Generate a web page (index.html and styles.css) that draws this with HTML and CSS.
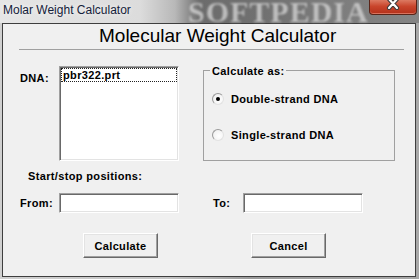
FILE: index.html
```html
<!DOCTYPE html>
<html>
<head>
<meta charset="utf-8">
<link rel="stylesheet" href="styles.css">
</head>
<body>
<div class="window">
  <div class="titlebar">
    <span class="title">Molar Weight Calculator</span>
    <span class="wm">SOFTPEDIA</span>
    <div class="close">
      <svg width="14" height="10" viewBox="0 0 14 10">
        <path d="M3 -1 L11 8 M11 -1 L3 8" stroke="#3a3a3a" stroke-width="4.2" stroke-linecap="round"/>
        <path d="M3 -1 L11 8 M11 -1 L3 8" stroke="#ffffff" stroke-width="2.2" stroke-linecap="round"/>
      </svg>
    </div>
  </div>
  <div class="client">
    <h1 class="heading">Molecular Weight Calculator</h1>
    <div class="rule"></div>
    <div class="row1">
      <label class="lbl dna">DNA:</label>
      <div class="listbox"><div class="item">pbr322.prt</div></div>
      <fieldset class="group">
        <legend>Calculate as:</legend>
        <div class="radio r1"><span class="circle on"></span><span>Double-strand DNA</span></div>
        <div class="radio r2"><span class="circle"></span><span>Single-strand DNA</span></div>
      </fieldset>
    </div>
    <div class="section">Start/stop positions:</div>
    <div class="row3">
      <label class="lbl from">From:</label>
      <div class="input"></div>
      <label class="lbl to">To:</label>
      <div class="input"></div>
    </div>
    <div class="row4">
      <button class="btn">Calculate</button>
      <button class="btn cancel">Cancel</button>
    </div>
  </div>
</div>
</body>
</html>
```
FILE: styles.css
```css
html, body {
  margin: 0;
  padding: 0;
}
body {
  width: 419px;
  height: 279px;
  overflow: hidden;
  font-family: "Liberation Sans", Arial, sans-serif;
}
.window {
  height: 279px;
  display: flex;
  flex-direction: column;
  background: linear-gradient(to right, #d0d0d0 0, #c4c4c4 40%, #9a9a9a 60%, #a8a8a8 100%);
}
.titlebar {
  height: 23px;
  flex: none;
  position: relative;
  display: flex;
  align-items: flex-start;
  background: linear-gradient(to right, #e6e6e6 0, #dcdcdc 140px, #b8b8b8 175px, #6c6c6c 200px, #707070 260px, #7c7c7c 330px, #858585 419px);
}
.title {
  padding: 3px 0 0 3px;
  font-size: 12px;
  line-height: 14px;
  color: #14213a;
  text-shadow: 0 0 5px rgba(255,255,255,0.9);
  position: relative;
  z-index: 1;
}
.wm {
  position: absolute;
  left: 188px;
  top: 0;
  font-family: "Liberation Serif", serif;
  font-weight: bold;
  font-size: 30px;
  line-height: 23px;
  letter-spacing: 1px;
  color: rgba(215,215,215,0.75);
  filter: blur(1.2px);
}
.close {
  margin-left: auto;
  margin-right: 2px;
  width: 48px;
  height: 15px;
  box-sizing: border-box;
  border: 1px solid #5a2418;
  border-top: none;
  border-radius: 0 0 4px 4px;
  background: linear-gradient(#dc7a62, #c9452c 45%, #b3301a);
  box-shadow: inset 0 -1px 0 rgba(255,180,160,0.5);
  display: flex;
  justify-content: center;
  align-items: flex-start;
  overflow: hidden;
  position: relative;
  z-index: 1;
}
.client {
  flex: 1;
  margin: 0 3px 2px 2px;
  border: 1px solid #3e3e3e;
  background: #f0f0f0;
  font-size: 11px;
  font-weight: bold;
  letter-spacing: 0.35px;
  color: #000;
}
.heading {
  margin: 1px 0 0;
  padding-left: 96px;
  height: 22px;
  font-size: 19px;
  line-height: 22px;
  font-weight: normal;
  letter-spacing: 0;
}
.rule {
  margin: 2px 11px 0 16px;
  height: 1px;
  background: #a0a0a0;
}
.row1 {
  display: flex;
  align-items: flex-start;
  margin-top: 12px;
  padding-left: 17px;
}
.lbl {
  line-height: 13px;
}
.dna {
  width: 39px;
  margin-top: 10px;
}
.listbox {
  margin-top: 4px;
  width: 120px;
  height: 95px;
  box-sizing: border-box;
  background: #fff;
  border: 1px solid;
  border-color: #a0a0a0 #fff #fff #a0a0a0;
  box-shadow: inset 1px 1px 0 #696969, inset -1px -1px 0 #e3e3e3;
  padding: 1px;
}
.item {
  border: 1px dotted #222;
  padding-left: 1px;
  line-height: 12px;
}
.group {
  margin: 0 0 0 24px;
  padding: 0 0 19px 0;
  width: 192px;
  box-sizing: border-box;
  min-width: 0;
  border: 1px solid #a0a0a0;
}
.group legend {
  margin-left: 6px;
  padding: 3px 2px 0;
  line-height: 13px;
}
.radio {
  display: flex;
  align-items: center;
  height: 13px;
  padding-left: 8px;
  gap: 7px;
}
.r1 { margin-top: 14px; }
.r2 { margin-top: 23px; }
.circle {
  width: 12px;
  height: 12px;
  box-sizing: border-box;
  border-radius: 50%;
  border: 1px solid;
  border-color: #9a9a9a #e2e2e2 #e2e2e2 #9a9a9a;
  background: radial-gradient(circle at 60% 60%, #ffffff 0, #f4f4f4 60%, #dcdcdc 100%);
  display: flex;
  align-items: center;
  justify-content: center;
}
.circle.on::after {
  content: "";
  width: 4px;
  height: 4px;
  border-radius: 50%;
  background: #000;
}
.section {
  margin-top: 9px;
  padding-left: 25px;
  line-height: 13px;
}
.row3 {
  display: flex;
  align-items: center;
  margin-top: 10px;
  padding-left: 17px;
}
.from { width: 39px; }
.to { width: 30px; margin-left: 34px; }
.input {
  width: 120px;
  height: 20px;
  box-sizing: border-box;
  background: #fff;
  border: 1px solid;
  border-color: #a0a0a0 #fff #fff #a0a0a0;
  box-shadow: inset 1px 1px 0 #696969, inset -1px -1px 0 #e3e3e3;
}
.row4 {
  display: flex;
  margin-top: 20px;
  padding-left: 80px;
}
.btn {
  width: 75px;
  height: 25px;
  box-sizing: border-box;
  margin: 0;
  padding: 0;
  font-family: "Liberation Sans", Arial, sans-serif;
  font-size: 11px;
  font-weight: bold;
  letter-spacing: 0.35px;
  color: #000;
  background: #f0f0f0;
  border: 1px solid;
  border-color: #fff #696969 #696969 #fff;
  box-shadow: inset -1px -1px 0 #a0a0a0, inset 1px 1px 0 #e3e3e3;
}
.cancel { margin-left: 93px; }
```
